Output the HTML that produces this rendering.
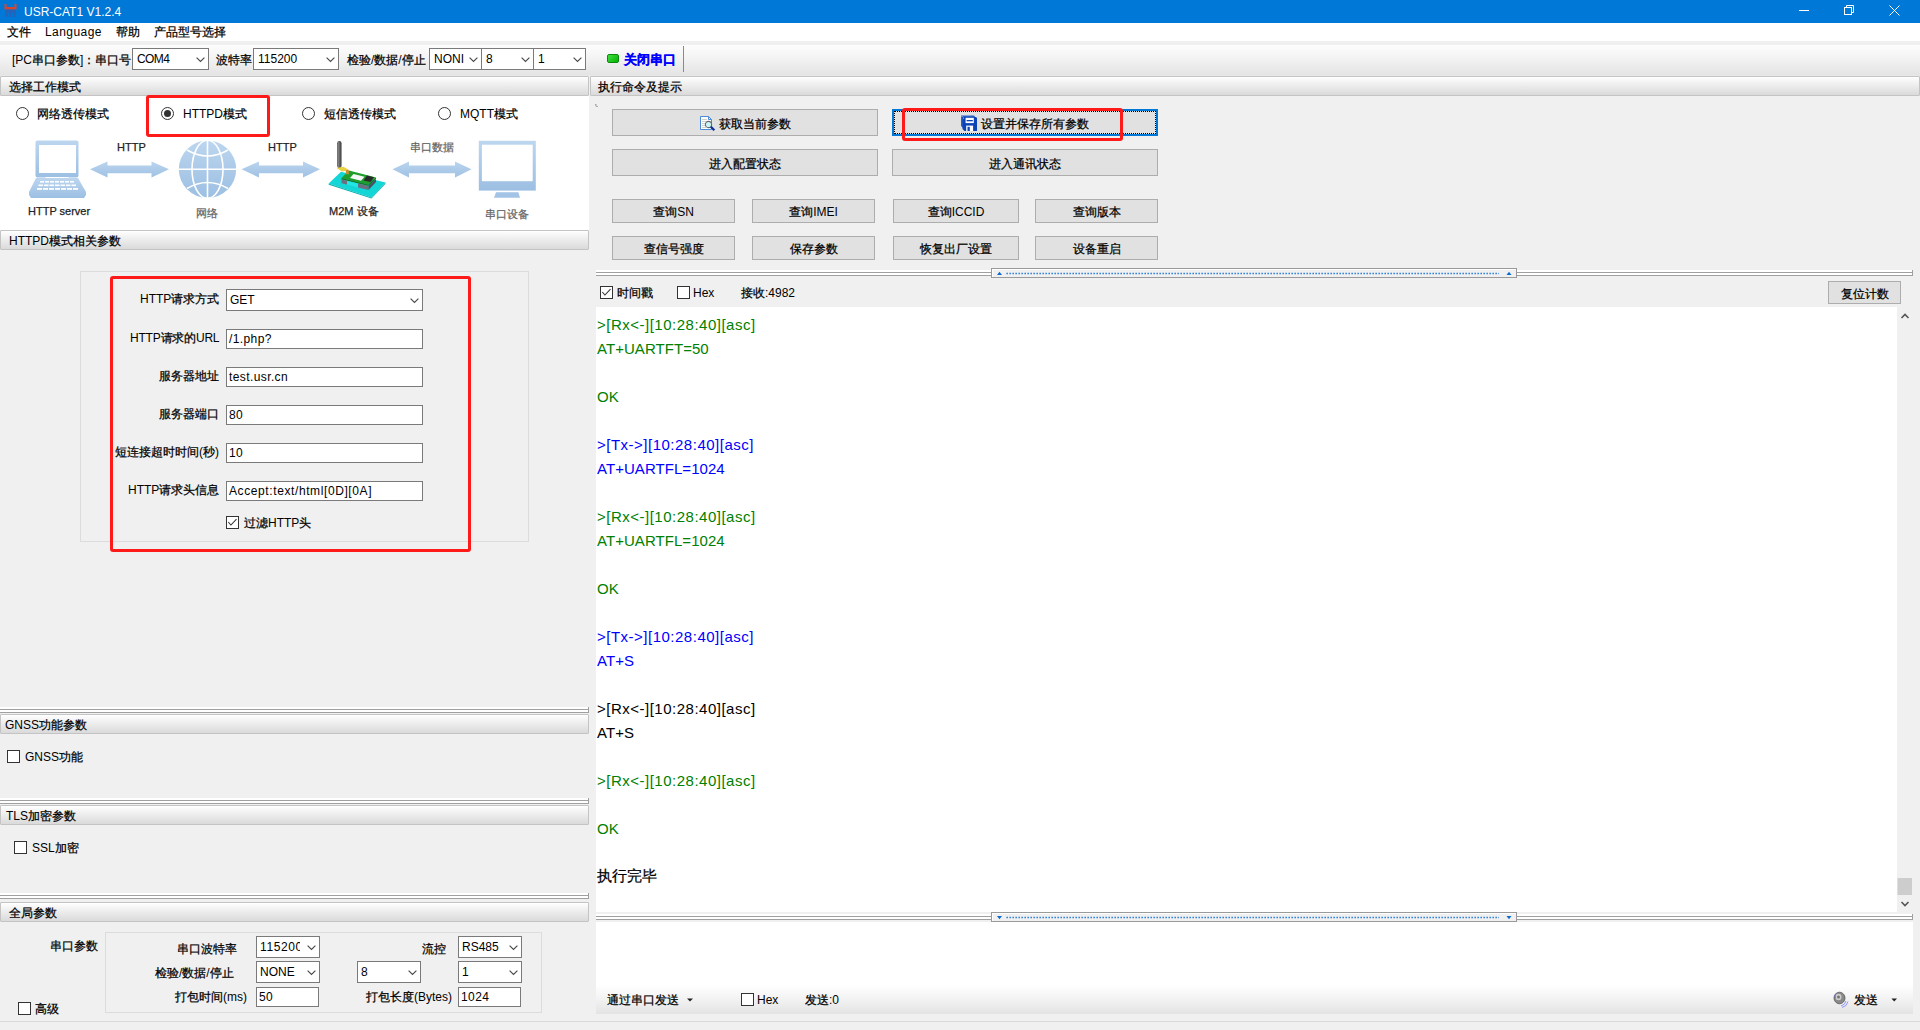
<!DOCTYPE html>
<html><head><meta charset="utf-8">
<style>
*{box-sizing:border-box;margin:0;padding:0}
html,body{width:1920px;height:1030px;overflow:hidden;background:#f0f0f0;font-family:"Liberation Sans",sans-serif;font-size:12px;color:#000}
.a{position:absolute}
.c{-webkit-text-stroke:0.25px currentColor}
#rx{-webkit-text-stroke:0}
.t{position:absolute;white-space:nowrap;line-height:14px}
.hdr{position:absolute;height:20px;background:linear-gradient(#ffffff,#f3f3f3 30%,#dadada);border:1px solid #c4c4c4;border-radius:1px}
.hdr>span{position:absolute;left:8px;top:3px;line-height:14px}
.combo{position:absolute;background:#fff;border:1px solid #7a7a7a}
.combo>span{position:absolute;left:4px;top:3px;line-height:14px}
.combo .chev{position:absolute;right:3px;top:8px}
.edit{position:absolute;background:#fff;border:1px solid #7a7a7a}
.edit>span{position:absolute;left:2px;top:2px;line-height:14px;letter-spacing:0.4px}
.btn{position:absolute;background:#e1e1e1;border:1px solid #adadad;text-align:center;line-height:14px}
.cb{position:absolute;width:13px;height:13px;background:#fff;border:1px solid #333}
.rb{position:absolute;width:13px;height:13px;background:#fff;border:1px solid #333;border-radius:50%}
.split{position:absolute;height:6px;border-top:2px solid #fff;background:linear-gradient(#fff 0,#fff 0px)}
</style></head><body>

<!-- title bar -->
<div class="a" style="left:0;top:0;width:1920px;height:23px;background:#0078d7"></div>
<svg class="a" style="left:3px;top:3px" width="15" height="16" viewBox="0 0 15 16">
<path d="M1.5 1 L3.5 1 L3.5 4 L11.5 4 L11.5 1 L13.5 1 L13.5 6.5 L1.5 6.5 Z" fill="#d9442f"/>
<path d="M2 6.5 L13 6.5 L12.5 14 L10 14 L10 10 L8.5 10 L8.5 14 L6.5 14 L6.5 10 L5 10 L5 14 L2.5 14 Z" fill="#2f5db0" opacity="0.75"/>
</svg>
<div class="t" style="left:24px;top:5px;color:#fff;font-size:12px;line-height:14px;-webkit-text-stroke:0">USR-CAT1 V1.2.4</div>
<svg class="a" style="left:1790px;top:0" width="130" height="23">
<line x1="9" y1="10.5" x2="19" y2="10.5" stroke="#fff" stroke-width="1"/>
<rect x="54.5" y="7.5" width="7" height="7" fill="none" stroke="#fff"/>
<path d="M56.5 7.5 V5.5 H63.5 V12.5 H61.5" fill="none" stroke="#fff"/>
<path d="M99.5 5.5 L109.5 15.5 M109.5 5.5 L99.5 15.5" stroke="#fff" stroke-width="1"/>
</svg>

<!-- menu bar -->
<div class="a" style="left:0;top:23px;width:1920px;height:18px;background:#fff"></div>
<div class="t" style="left:7px;top:25px"><span class="c">文件</span></div>
<div class="t" style="left:45px;top:25px;letter-spacing:0.45px">Language</div>
<div class="t" style="left:116px;top:25px"><span class="c">帮助</span></div>
<div class="t" style="left:154px;top:25px"><span class="c">产品型号选择</span></div>

<!-- toolbar -->
<div class="a" style="left:0;top:45px;width:1920px;height:30px;background:linear-gradient(#fdfdfd,#f4f4f4 40%,#e4e4e4)"></div>


<!-- toolbar contents -->
<div class="t" style="left:12px;top:53px">[PC<span class="c">串口参数</span>]<span class="c">：串口号</span></div>
<div class="combo" style="left:132px;top:48px;width:77px;height:22px"><span style="letter-spacing:-0.6px">COM4</span><svg class="chev" width="9" height="6"><path d="M0.6 0.6 L4.5 4.5 L8.4 0.6" fill="none" stroke="#4a4a4a" stroke-width="1.15"/></svg></div>
<div class="t" style="left:216px;top:53px"><span class="c">波特率</span></div>
<div class="combo" style="left:253px;top:48px;width:86px;height:22px"><span>115200</span><svg class="chev" width="9" height="6"><path d="M0.6 0.6 L4.5 4.5 L8.4 0.6" fill="none" stroke="#4a4a4a" stroke-width="1.15"/></svg></div>
<div class="t" style="left:347px;top:53px"><span class="c">检验</span>/<span class="c">数据</span>/<span class="c">停止</span></div>
<div class="combo" style="left:429px;top:48px;width:53px;height:22px;overflow:hidden"><span>NONI</span><svg class="chev" width="9" height="6"><path d="M0.6 0.6 L4.5 4.5 L8.4 0.6" fill="none" stroke="#4a4a4a" stroke-width="1.15"/></svg></div>
<div class="combo" style="left:481px;top:48px;width:53px;height:22px"><span>8</span><svg class="chev" width="9" height="6"><path d="M0.6 0.6 L4.5 4.5 L8.4 0.6" fill="none" stroke="#4a4a4a" stroke-width="1.15"/></svg></div>
<div class="combo" style="left:533px;top:48px;width:53px;height:22px"><span>1</span><svg class="chev" width="9" height="6"><path d="M0.6 0.6 L4.5 4.5 L8.4 0.6" fill="none" stroke="#4a4a4a" stroke-width="1.15"/></svg></div>
<div class="a" style="left:607px;top:54px;width:12px;height:9px;border-radius:2px;background:linear-gradient(135deg,#3fe03f,#07b007);border:1px solid #0a8a0a"></div>
<div class="t" style="left:624px;top:53px;color:#0000ff;font-weight:bold;font-size:13px;-webkit-text-stroke:0.3px #0000ff"><span class="c">关闭串口</span></div>
<div class="a" style="left:683px;top:46px;width:1px;height:26px;background:#8a8a8a"></div>
<div class="a" style="left:0;top:75px;width:1920px;height:1px;background:#e8e8e8"></div>

<!-- LEFT PANEL -->
<div class="hdr" style="left:0;top:76px;width:589px"><span style="left:8px"><span class="c">选择工作模式</span></span></div>
<div class="a" style="left:0;top:96px;width:589px;height:134px;background:#fff"></div>
<div class="hdr" style="left:0;top:230px;width:589px"><span style="left:8px">HTTPD<span class="c">模式相关参数</span></span></div>

<!-- mode radios -->
<svg class="a" style="left:16px;top:107px" width="13" height="13"><circle cx="6.5" cy="6.5" r="6" fill="#fff" stroke="#333" stroke-width="1"/></svg>
<div class="t" style="left:37px;top:107px"><span class="c">网络透传模式</span></div>
<svg class="a" style="left:161px;top:107px" width="13" height="13"><circle cx="6.5" cy="6.5" r="6" fill="#fff" stroke="#333" stroke-width="1"/><circle cx="6.5" cy="6.5" r="3.5" fill="#333"/></svg>
<div class="t" style="left:183px;top:107px">HTTPD<span class="c">模式</span></div>
<svg class="a" style="left:302px;top:107px" width="13" height="13"><circle cx="6.5" cy="6.5" r="6" fill="#fff" stroke="#333" stroke-width="1"/></svg>
<div class="t" style="left:324px;top:107px"><span class="c">短信透传模式</span></div>
<svg class="a" style="left:438px;top:107px" width="13" height="13"><circle cx="6.5" cy="6.5" r="6" fill="#fff" stroke="#333" stroke-width="1"/></svg>
<div class="t" style="left:460px;top:107px">MQTT<span class="c">模式</span></div>
<div class="a" style="left:146px;top:95px;width:124px;height:42px;border:3px solid #ff1a1a;border-radius:3px"></div>

<!-- diagram -->
<svg class="a" style="left:0;top:130px" width="589" height="100" viewBox="0 130 589 100">
<defs>
<linearGradient id="gb" x1="0" y1="0" x2="0" y2="1"><stop offset="0" stop-color="#bcd6ef"/><stop offset="1" stop-color="#9cbfe2"/></linearGradient>
<linearGradient id="ga" x1="0" y1="0" x2="0" y2="1"><stop offset="0" stop-color="#bad4ee"/><stop offset="1" stop-color="#a0c2e4"/></linearGradient>
</defs>
<!-- laptop -->
<rect x="35.5" y="140.5" width="43" height="37" rx="2" fill="url(#gb)"/>
<rect x="39" y="145" width="37" height="28" fill="#fff"/>
<rect x="45.5" y="177" width="23" height="1" fill="#fff"/>
<path d="M36 178 L78 178 L86 192 L86 195 L84 198 L31 198 L29 195 L29 192 Z" fill="url(#gb)"/>
<g fill="#fff">
<rect x="40" y="181" width="4" height="1.6"/><rect x="45" y="181" width="4" height="1.6"/><rect x="50" y="181" width="4" height="1.6"/><rect x="55" y="181" width="4" height="1.6"/><rect x="60" y="181" width="4" height="1.6"/><rect x="65" y="181" width="4" height="1.6"/><rect x="70" y="181" width="4" height="1.6"/>
<rect x="38.5" y="184.5" width="4.5" height="1.6"/><rect x="44" y="184.5" width="4.5" height="1.6"/><rect x="49.5" y="184.5" width="4.5" height="1.6"/><rect x="55" y="184.5" width="4.5" height="1.6"/><rect x="60.5" y="184.5" width="4.5" height="1.6"/><rect x="66" y="184.5" width="4.5" height="1.6"/><rect x="71.5" y="184.5" width="4.5" height="1.6"/>
<rect x="37" y="188" width="5" height="1.8"/><rect x="43" y="188" width="5" height="1.8"/><rect x="49" y="188" width="5" height="1.8"/><rect x="55" y="188" width="5" height="1.8"/><rect x="61" y="188" width="5" height="1.8"/><rect x="67" y="188" width="5" height="1.8"/><rect x="73" y="188" width="5" height="1.8"/>
</g>
<!-- arrows -->
<path d="M90 169.3 L107.5 161.5 L107.5 165.4 L151.5 165.4 L151.5 161.5 L169 169.3 L151.5 177.5 L151.5 173.2 L107.5 173.2 L107.5 177.5 Z" fill="url(#ga)"/>
<path d="M241.5 169.3 L259 161.5 L259 165.4 L303 165.4 L303 161.5 L320 169.3 L303 177.5 L303 173.2 L259 173.2 L259 177.5 Z" fill="url(#ga)"/>
<path d="M392.5 169.3 L409 161.5 L409 165.4 L455 165.4 L455 161.5 L471.5 169.3 L455 177.5 L455 173.2 L409 173.2 L409 177.5 Z" fill="url(#ga)"/>
<!-- globe -->
<circle cx="207.5" cy="169.3" r="28.7" fill="url(#gb)"/>
<g fill="none" stroke="#fff" stroke-width="1.6">
<line x1="207.5" y1="140" x2="207.5" y2="199"/>
<line x1="178" y1="169.3" x2="237" y2="169.3"/>
<ellipse cx="207.5" cy="169.3" rx="15.5" ry="29"/>
<path d="M187 150 Q207.5 162 228 150"/>
<path d="M187 188.5 Q207.5 176.5 228 188.5"/>
</g>
<!-- m2m device -->
<path d="M328.7 183.5 L341 171.7 L385.5 182.6 L371.5 197.4 Z" fill="#13d6d6"/>
<path d="M371.5 197.4 L385.5 182.6 L385.5 183.8 L371.5 198.6 L328.7 184.7 L328.7 183.5 Z" fill="#0bb3b3"/>
<path d="M341.5 178 L349 170.5 L376 177.5 L368.5 184.5 Z" fill="#1f9e2c"/>
<path d="M341.5 178 L368.5 184.5 L368.5 186 L341.5 179.5 Z" fill="#157a20"/>
<path d="M368.5 184.5 L376 177.5 L376 179 L368.5 186 Z" fill="#126a1c"/>
<path d="M341.5 179.5 L347 180.8 L347 184.5 L341.5 183.2 Z" fill="#6a7080"/>
<path d="M358 183.5 L368.5 186 L368.5 190 L358 187.5 Z" fill="#6a7080"/>
<path d="M368.5 186 L376 179 L376 182 L368.5 190 Z" fill="#4a5060"/>
<path d="M347 180.8 L358 183.5 L358 187.5 L347 184.5 Z" fill="#22e6e6"/>
<path d="M350 178 L353.5 174 L364.5 176.8 L361 180.8 Z" fill="#f6f6f6"/>
<path d="M363.5 180.5 L367 175.5 L374 177.3 L370.5 182 Z" fill="#2a2a2a"/>
<rect x="337.2" y="141" width="4.4" height="27" rx="2.2" fill="#505050"/>
<rect x="338.2" y="142" width="1.2" height="25" fill="#8a8a8a"/>
<path d="M336.5 168 L343.5 166.8 L349 170 L342 171.5 Z" fill="#e8d040"/>
<rect x="345.8" y="170" width="3" height="4.2" fill="#c89030"/>
<!-- monitor -->
<rect x="478.8" y="140.8" width="57" height="49.8" fill="url(#gb)"/>
<rect x="481.9" y="144.7" width="50.8" height="36.5" fill="#fff"/>
<path d="M496 192.2 L518.4 192.2 L520 197.8 L494 197.8 Z" fill="#a3c4e6"/>
</svg>
<div class="t" style="left:117px;top:140px;font-size:11px;color:#222;-webkit-text-stroke:0.25px #222">HTTP</div>
<div class="t" style="left:268px;top:140px;font-size:11px;color:#222;-webkit-text-stroke:0.25px #222">HTTP</div>
<div class="t" style="left:410px;top:140px;font-size:11px;color:#666"><span class="c">串口数据</span></div>
<div class="t" style="left:28px;top:204px;font-size:11px;color:#222;-webkit-text-stroke:0.25px #222">HTTP server</div>
<div class="t" style="left:196px;top:206px;font-size:11px;color:#666"><span class="c">网络</span></div>
<div class="t" style="left:329px;top:204px;font-size:11px;color:#222;-webkit-text-stroke:0.25px #222">M2M <span class="c">设备</span></div>
<div class="t" style="left:485px;top:207px;font-size:11px;color:#666"><span class="c">串口设备</span></div>

<!-- HTTPD params -->
<div class="a" style="left:80px;top:271px;width:449px;height:271px;border:1px solid #dcdcdc"></div>
<div class="t" style="left:140px;top:292px">HTTP<span class="c">请求方式</span></div>
<div class="combo" style="left:226px;top:289px;width:197px;height:22px"><span style="left:3px">GET</span><svg class="chev" width="9" height="6"><path d="M0.6 0.6 L4.5 4.5 L8.4 0.6" fill="none" stroke="#4a4a4a" stroke-width="1.15"/></svg></div>
<div class="t" style="left:130px;top:331px;letter-spacing:-0.2px">HTTP<span class="c">请求的</span>URL</div>
<div class="edit" style="left:226px;top:329px;width:197px;height:20px"><span>/1.php?</span></div>
<div class="t" style="left:159px;top:369px"><span class="c">服务器地址</span></div>
<div class="edit" style="left:226px;top:367px;width:197px;height:20px"><span>test.usr.cn</span></div>
<div class="t" style="left:159px;top:407px"><span class="c">服务器端口</span></div>
<div class="edit" style="left:226px;top:405px;width:197px;height:20px"><span>80</span></div>
<div class="t" style="left:115px;top:445px"><span class="c">短连接超时时间</span>(<span class="c">秒</span>)</div>
<div class="edit" style="left:226px;top:443px;width:197px;height:20px"><span>10</span></div>
<div class="t" style="left:128px;top:483px">HTTP<span class="c">请求头信息</span></div>
<div class="edit" style="left:226px;top:481px;width:197px;height:20px"><span style="letter-spacing:0.6px">Accept:text/html[0D][0A]</span></div>
<div class="cb" style="left:226px;top:516px"></div>
<svg class="a" style="left:226px;top:516px" width="13" height="13"><path d="M2.3 6 L4.9 9 L10.5 3.2" fill="none" stroke="#333" stroke-width="1.05"/></svg>
<div class="t" style="left:244px;top:516px"><span class="c">过滤</span>HTTP<span class="c">头</span></div>
<div class="a" style="left:110px;top:276px;width:361px;height:276px;border:3px solid #ff1a1a;border-radius:3px"></div>

<!-- GNSS -->
<div class="a" style="left:0;top:707px;width:589px;height:2px;background:#fff"></div>
<div class="a" style="left:0;top:709px;width:589px;height:1px;background:#a0a0a0"></div>
<div class="a" style="left:0;top:710px;width:589px;height:2px;background:#fff"></div>
<div class="a" style="left:0;top:712px;width:589px;height:1px;background:#a0a0a0"></div>
<div class="a" style="left:588px;top:707px;width:1px;height:6px;background:#a0a0a0"></div>
<div class="hdr" style="left:0;top:714px;width:589px"><span style="left:4px">GNSS<span class="c">功能参数</span></span></div>
<div class="cb" style="left:7px;top:750px"></div>
<div class="t" style="left:25px;top:750px">GNSS<span class="c">功能</span></div>

<!-- TLS -->
<div class="a" style="left:0;top:798px;width:589px;height:2px;background:#fff"></div>
<div class="a" style="left:0;top:800px;width:589px;height:1px;background:#a0a0a0"></div>
<div class="a" style="left:0;top:801px;width:589px;height:2px;background:#fff"></div>
<div class="a" style="left:0;top:803px;width:589px;height:1px;background:#a0a0a0"></div>
<div class="a" style="left:588px;top:798px;width:1px;height:6px;background:#a0a0a0"></div>
<div class="hdr" style="left:0;top:805px;width:589px"><span style="left:5px">TLS<span class="c">加密参数</span></span></div>
<div class="cb" style="left:14px;top:841px"></div>
<div class="t" style="left:32px;top:841px">SSL<span class="c">加密</span></div>

<!-- Global -->
<div class="a" style="left:0;top:893px;width:589px;height:2px;background:#fff"></div>
<div class="a" style="left:0;top:895px;width:589px;height:1px;background:#a0a0a0"></div>
<div class="a" style="left:0;top:896px;width:589px;height:2px;background:#fff"></div>
<div class="a" style="left:0;top:898px;width:589px;height:1px;background:#a0a0a0"></div>
<div class="a" style="left:588px;top:893px;width:1px;height:6px;background:#a0a0a0"></div>
<div class="hdr" style="left:0;top:902px;width:589px"><span style="left:8px"><span class="c">全局参数</span></span></div>
<div class="a" style="left:105px;top:932px;width:437px;height:81px;border:1px solid #dcdcdc"></div>
<div class="t" style="left:50px;top:939px"><span class="c">串口参数</span></div>
<div class="t" style="left:177px;top:942px"><span class="c">串口波特率</span></div>
<div class="combo" style="left:256px;top:936px;width:64px;height:22px;overflow:hidden"><span style="left:3px;width:40px;overflow:hidden;letter-spacing:0.6px">115200</span><svg class="chev" width="9" height="6"><path d="M0.6 0.6 L4.5 4.5 L8.4 0.6" fill="none" stroke="#4a4a4a" stroke-width="1.15"/></svg></div>
<div class="t" style="left:422px;top:942px"><span class="c">流控</span></div>
<div class="combo" style="left:458px;top:936px;width:64px;height:22px"><span style="left:3px">RS485</span><svg class="chev" width="9" height="6"><path d="M0.6 0.6 L4.5 4.5 L8.4 0.6" fill="none" stroke="#4a4a4a" stroke-width="1.15"/></svg></div>
<div class="t" style="left:155px;top:966px"><span class="c">检验</span>/<span class="c">数据</span>/<span class="c">停止</span></div>
<div class="combo" style="left:256px;top:961px;width:64px;height:22px"><span style="left:3px">NONE</span><svg class="chev" width="9" height="6"><path d="M0.6 0.6 L4.5 4.5 L8.4 0.6" fill="none" stroke="#4a4a4a" stroke-width="1.15"/></svg></div>
<div class="combo" style="left:357px;top:961px;width:64px;height:22px"><span style="left:3px">8</span><svg class="chev" width="9" height="6"><path d="M0.6 0.6 L4.5 4.5 L8.4 0.6" fill="none" stroke="#4a4a4a" stroke-width="1.15"/></svg></div>
<div class="combo" style="left:458px;top:961px;width:64px;height:22px"><span style="left:3px">1</span><svg class="chev" width="9" height="6"><path d="M0.6 0.6 L4.5 4.5 L8.4 0.6" fill="none" stroke="#4a4a4a" stroke-width="1.15"/></svg></div>
<div class="t" style="left:175px;top:990px"><span class="c">打包时间</span>(ms)</div>
<div class="edit" style="left:256px;top:987px;width:63px;height:20px"><span>50</span></div>
<div class="t" style="left:366px;top:990px"><span class="c">打包长度</span>(Bytes)</div>
<div class="edit" style="left:458px;top:987px;width:63px;height:20px"><span>1024</span></div>
<div class="cb" style="left:18px;top:1002px"></div>
<div class="t" style="left:35px;top:1002px"><span class="c">高级</span></div>
<div class="a" style="left:0;top:1021px;width:1920px;height:1px;background:#dadada"></div>

<!-- RIGHT PANEL -->
<svg class="a" style="left:594px;top:103px" width="6" height="6"><path d="M1 1 H3 L2 2 L3 3 H4 V4 H2.5 L1 2.5 Z" fill="#a8a8a8"/></svg>
<div class="hdr" style="left:590px;top:76px;width:1330px"><span style="left:7px"><span class="c">执行命令及提示</span></span></div>
<div class="btn" style="left:612px;top:109px;width:266px;height:27px;padding-top:7px"><span style="padding-left:20px"><span class="c">获取当前参数</span></span></div>
<svg class="a" style="left:699px;top:115px" width="18" height="18" viewBox="0 0 18 18">
<path d="M1.5 1.5 H9.5 L12.5 4.5 V14.5 H1.5 Z" fill="#fff" stroke="#4a8ad8" stroke-width="1"/>
<path d="M9.5 1.5 V4.5 H12.5" fill="none" stroke="#4a8ad8" stroke-width="1"/>
<g stroke="#d0d0d0" stroke-width="1"><line x1="3" y1="4.5" x2="8" y2="4.5"/><line x1="3" y1="6.5" x2="8" y2="6.5"/><line x1="3" y1="8.5" x2="7" y2="8.5"/><line x1="3" y1="10.5" x2="7" y2="10.5"/><line x1="3" y1="12.5" x2="7" y2="12.5"/></g>
<circle cx="9.5" cy="9.5" r="3.1" fill="#c8f6fa" stroke="#6a6a6a" stroke-width="1.1"/>
<line x1="11.8" y1="11.8" x2="15.3" y2="15.3" stroke="#0a2e9a" stroke-width="2.3"/>
</svg>
<div class="btn" style="left:892px;top:109px;width:266px;height:27px;border:2px solid #0078d7;padding-top:6px"><div class="a" style="left:0;top:0;right:0;bottom:0;border:1px dotted #000"></div><span style="padding-left:20px"><span class="c">设置并保存所有参数</span></span></div>
<svg class="a" style="left:961px;top:115px" width="17" height="17" viewBox="0 0 17 17">
<path d="M0 0.5 H13 L14 1.5 V13 H2 L0 11 Z" fill="#2c5fc4"/>
<path d="M1.5 2 H15 L16 3 V16 H3.5 L1.5 14 Z" fill="#0b44b6"/>
<rect x="4.6" y="2.8" width="8.2" height="5.3" fill="#fff"/><rect x="5.6" y="5" width="6.2" height="1.3" fill="#0b44b6"/>
<rect x="5.2" y="10.6" width="6.9" height="5.4" fill="#fff"/><rect x="6.5" y="11.8" width="2.3" height="4.2" fill="#0b44b6"/>
<rect x="0.5" y="1" width="1" height="1" fill="#9fc0ff"/><rect x="2" y="2.6" width="1" height="1" fill="#9fc0ff"/>
</svg>
<div class="a" style="left:902px;top:108px;width:221px;height:33px;border:3px solid #ff1a1a;border-radius:3px"></div>
<div class="btn" style="left:612px;top:149px;width:266px;height:27px;padding-top:7px"><span class="c">进入配置状态</span></div>
<div class="btn" style="left:892px;top:149px;width:266px;height:27px;padding-top:7px"><span class="c">进入通讯状态</span></div>
<div class="btn" style="left:612px;top:199px;width:123px;height:24px;padding-top:5px"><span class="c">查询</span>SN</div>
<div class="btn" style="left:752px;top:199px;width:123px;height:24px;padding-top:5px"><span class="c">查询</span>IMEI</div>
<div class="btn" style="left:893px;top:199px;width:126px;height:24px;padding-top:5px"><span class="c">查询</span>ICCID</div>
<div class="btn" style="left:1035px;top:199px;width:123px;height:24px;padding-top:5px"><span class="c">查询版本</span></div>
<div class="btn" style="left:612px;top:236px;width:123px;height:24px;padding-top:5px"><span class="c">查信号强度</span></div>
<div class="btn" style="left:752px;top:236px;width:123px;height:24px;padding-top:5px"><span class="c">保存参数</span></div>
<div class="btn" style="left:893px;top:236px;width:126px;height:24px;padding-top:5px"><span class="c">恢复出厂设置</span></div>
<div class="btn" style="left:1035px;top:236px;width:123px;height:24px;padding-top:5px"><span class="c">设备重启</span></div>

<!-- splitter 1 -->
<div class="a" style="left:596px;top:270px;width:1317px;height:2px;background:#fff"></div>
<div class="a" style="left:596px;top:272px;width:1317px;height:1px;background:#a0a0a0"></div>
<div class="a" style="left:596px;top:273px;width:1317px;height:2px;background:#fff"></div>
<div class="a" style="left:596px;top:275px;width:1317px;height:1px;background:#a0a0a0"></div>
<div class="a" style="left:1912px;top:270px;width:1px;height:6px;background:#a0a0a0"></div>
<div class="a" style="left:991px;top:268px;width:526px;height:10px;border:1px solid #9a9a9a;background:#f0f0f0;box-shadow:inset 1px 1px 0 #fff"></div>
<svg class="a" style="left:991px;top:268px" width="526" height="10">
<path d="M6 7 L8.5 3.8 L11 7 Z" fill="#0a6ad0"/>
<path d="M516 7 L518.5 3.8 L521 7 Z" fill="#0a6ad0" transform="translate(-0.5,0)"/>
<path d="M15.5 5.5 H508" stroke="#0a6ad0" stroke-width="1.3" stroke-dasharray="1.3 1.7"/>
</svg>

<!-- receive toolbar -->
<div class="cb" style="left:600px;top:286px"></div>
<svg class="a" style="left:600px;top:286px" width="13" height="13"><path d="M2.3 6 L4.9 9 L10.5 3.2" fill="none" stroke="#333" stroke-width="1.05"/></svg>
<div class="t" style="left:617px;top:286px"><span class="c">时间戳</span></div>
<div class="cb" style="left:677px;top:286px"></div>
<div class="t" style="left:693px;top:286px">Hex</div>
<div class="t" style="left:741px;top:286px"><span class="c">接收</span>:4982</div>
<div class="btn" style="left:1828px;top:281px;width:73px;height:23px;padding-top:5px"><span class="c">复位计数</span></div>

<!-- receive area -->
<div class="a" style="left:596px;top:307px;width:1301px;height:605px;background:#fff"></div>
<div class="a" style="left:1897px;top:307px;width:16px;height:605px;background:#f0f0f0"></div>
<svg class="a" style="left:1897px;top:307px" width="16" height="605">
<path d="M4.5 11 L8 7.5 L11.5 11" fill="none" stroke="#555" stroke-width="1.6"/>
<rect x="0.5" y="571" width="14.5" height="17" fill="#cdcdcd"/>
<path d="M4.5 595 L8 598.5 L11.5 595" fill="none" stroke="#555" stroke-width="1.6"/>
</svg>
<div id="rx" class="a" style="left:597px;top:313px;width:1290px;height:590px;font-size:15px;line-height:24px;letter-spacing:0.05px">
<div class="a" style="left:0;top:0px;white-space:pre;color:#008000;letter-spacing:0.5px;">&gt;[Rx&lt;-][10:28:40][asc]</div>
<div class="a" style="left:0;top:24px;white-space:pre;color:#008000;">AT+UARTFT=50</div>
<div class="a" style="left:0;top:72px;white-space:pre;color:#008000;">OK</div>
<div class="a" style="left:0;top:120px;white-space:pre;color:#0000ff;letter-spacing:0.5px;">&gt;[Tx-&gt;][10:28:40][asc]</div>
<div class="a" style="left:0;top:144px;white-space:pre;color:#0000ff;">AT+UARTFL=1024</div>
<div class="a" style="left:0;top:192px;white-space:pre;color:#008000;letter-spacing:0.5px;">&gt;[Rx&lt;-][10:28:40][asc]</div>
<div class="a" style="left:0;top:216px;white-space:pre;color:#008000;">AT+UARTFL=1024</div>
<div class="a" style="left:0;top:264px;white-space:pre;color:#008000;">OK</div>
<div class="a" style="left:0;top:312px;white-space:pre;color:#0000ff;letter-spacing:0.5px;">&gt;[Tx-&gt;][10:28:40][asc]</div>
<div class="a" style="left:0;top:336px;white-space:pre;color:#0000ff;">AT+S</div>
<div class="a" style="left:0;top:384px;white-space:pre;color:#000;letter-spacing:0.5px;">&gt;[Rx&lt;-][10:28:40][asc]</div>
<div class="a" style="left:0;top:408px;white-space:pre;color:#000;">AT+S</div>
<div class="a" style="left:0;top:456px;white-space:pre;color:#008000;letter-spacing:0.5px;">&gt;[Rx&lt;-][10:28:40][asc]</div>
<div class="a" style="left:0;top:504px;white-space:pre;color:#008000;">OK</div>
<div class="a" style="left:0;top:551px;white-space:pre;color:#000;"><span class="c">执行完毕</span></div>
</div>

<!-- splitter 2 -->
<div class="a" style="left:596px;top:914px;width:1317px;height:2px;background:#fff"></div>
<div class="a" style="left:596px;top:916px;width:1317px;height:1px;background:#a0a0a0"></div>
<div class="a" style="left:596px;top:917px;width:1317px;height:2px;background:#fff"></div>
<div class="a" style="left:596px;top:919px;width:1317px;height:1px;background:#a0a0a0"></div>
<div class="a" style="left:1912px;top:914px;width:1px;height:6px;background:#a0a0a0"></div>
<div class="a" style="left:991px;top:912px;width:526px;height:10px;border:1px solid #9a9a9a;background:#f0f0f0;box-shadow:inset 1px 1px 0 #fff"></div>
<svg class="a" style="left:991px;top:912px" width="526" height="10">
<path d="M6 4 L8.5 7.2 L11 4 Z" fill="#0a6ad0"/>
<path d="M515.5 4 L518 7.2 L520.5 4 Z" fill="#0a6ad0"/>
<path d="M15.5 5.5 H508" stroke="#0a6ad0" stroke-width="1.3" stroke-dasharray="1.3 1.7"/>
</svg>

<!-- send area -->
<div class="a" style="left:596px;top:922px;width:1317px;height:64px;background:#fff"></div>
<div class="a" style="left:596px;top:986px;width:1317px;height:28px;background:linear-gradient(#fefefe,#f3f3f3 45%,#e3e3e3)"></div>
<div class="t" style="left:607px;top:993px"><span class="c">通过串口发送</span></div>
<svg class="a" style="left:687px;top:998px" width="8" height="5"><path d="M0 0.5 H6 L3 3.5 Z" fill="#222"/></svg>
<div class="cb" style="left:741px;top:993px"></div>
<div class="t" style="left:757px;top:993px">Hex</div>
<div class="t" style="left:805px;top:993px"><span class="c">发送</span>:0</div>
<svg class="a" style="left:1833px;top:991px" width="18" height="18" viewBox="0 0 18 18">
<ellipse cx="6.5" cy="7" rx="5.5" ry="5.8" fill="#888" stroke="#555" stroke-width="0.8"/>
<ellipse cx="5.5" cy="6" rx="3" ry="3.2" fill="#ccc"/>
<circle cx="5.5" cy="6" r="1.5" fill="#777"/>
<path d="M3 2.5 Q1 4 2.5 7" fill="none" stroke="#6a6aff" stroke-width="0.8"/>
<path d="M13 10 Q12 14 8 15" fill="none" stroke="#8a8aff" stroke-width="0.9"/>
<path d="M15 10.5 Q14 15.5 9 16.5" fill="none" stroke="#8a8aff" stroke-width="0.9"/>
</svg>
<div class="t" style="left:1854px;top:993px"><span class="c">发送</span></div>
<svg class="a" style="left:1891px;top:998px" width="8" height="5"><path d="M0.5 0.5 H6 L3.2 3.5 Z" fill="#222"/></svg>

</body></html>
